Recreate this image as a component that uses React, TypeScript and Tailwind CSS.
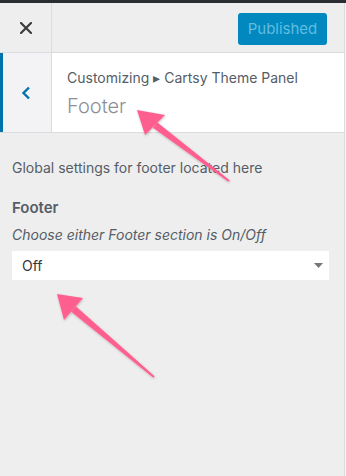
export default function App() {
  return (
    <div
      className="relative w-[346px] h-[476px] bg-[#f5f5f5] overflow-hidden"
      style={{ fontFamily: "Inter, 'Noto Sans', sans-serif" }}
    >
      <div className="h-[3px] bg-[#2a2d31]" />
      <div className="w-[345px] h-[473px] bg-[#eeeeee] border-r border-[#dcdcde] flex flex-col">
        {/* Top bar */}
        <div className="h-[50px] flex border-b border-[#dcdcde]">
          <div className="w-[52px] border-r border-[#dcdcde] flex items-center justify-center">
            <svg width="12" height="12" viewBox="0 0 12 12">
              <path d="M1 1 L11 11 M11 1 L1 11" stroke="#3c3c3c" strokeWidth="2.2" strokeLinecap="square" />
            </svg>
          </div>
          <div className="flex-1 flex justify-end items-start pt-[10px] pr-[17px]">
            <button className="w-[89px] h-[32px] rounded-[3px] bg-[#0088bf] text-[#62bde0] text-[15px] leading-[32px]">
              Published
            </button>
          </div>
        </div>

        {/* Section header */}
        <div className="h-[80px] flex border-b border-[#dcdcde]">
          <div className="w-[52px] flex border-r border-[#dcdcde] bg-[#f3f3f5]">
            <div className="w-[3px] bg-[#0073aa]" />
            <div className="flex-1 flex items-center justify-center pr-[3px]">
              <svg width="10" height="14" viewBox="0 0 10 14">
                <path d="M8 1.5 L2.5 7 L8 12.5" fill="none" stroke="#0073aa" strokeWidth="2.4" />
              </svg>
            </div>
          </div>
          <div className="flex-1 bg-white pl-[15px] pt-[15px]">
            <div className="text-[14px] leading-[20px] text-[#555d66]">
              Customizing ▸ Cartsy Theme Panel
            </div>
            <div className="mt-[4px] text-[20px] leading-[28px] font-light text-[#8c9096]">Footer</div>
          </div>
        </div>

        {/* Body */}
        <div className="px-[12px] pt-[25px] text-[#555d66]">
          <p className="text-[14px] leading-[20px]">Global settings for footer located here</p>
          <h3 className="mt-[20px] text-[15px] leading-[20px] font-semibold">Footer</h3>
          <p className="mt-[7px] text-[14px] leading-[20px] italic">Choose either Footer section is On/Off</p>
          <div className="mt-[6px] w-[317px] h-[29px] bg-white flex items-center justify-between pl-[10px] pr-[6px]">
            <span className="text-[14px] text-[#32373c]">Off</span>
            <svg width="9" height="5" viewBox="0 0 9 5">
              <path d="M0 0 L9 0 L4.5 5 Z" fill="#777" />
            </svg>
          </div>
        </div>
      </div>

      {/* Annotation arrows */}
      <svg className="absolute inset-0 pointer-events-none" width="346" height="476" viewBox="0 0 346 476">
        <defs>
          <filter id="sh" x="-20%" y="-20%" width="140%" height="140%">
            <feDropShadow dx="0.5" dy="1" stdDeviation="0.8" floodColor="#000" floodOpacity="0.25" />
          </filter>
        </defs>
        <g fill="#ff5f8f" filter="url(#sh)">
          <polygon points="137,110 165,115 145,135" />
          <polygon points="152.9,127.8 157.1,122.2 229.6,180.2 228.4,181.8" />
          <polygon points="57,294 83,298 64,320" />
          <polygon points="71.2,311.7 75.8,306.3 154.6,376.2 153.4,377.8" />
        </g>
      </svg>
    </div>
  )
}
